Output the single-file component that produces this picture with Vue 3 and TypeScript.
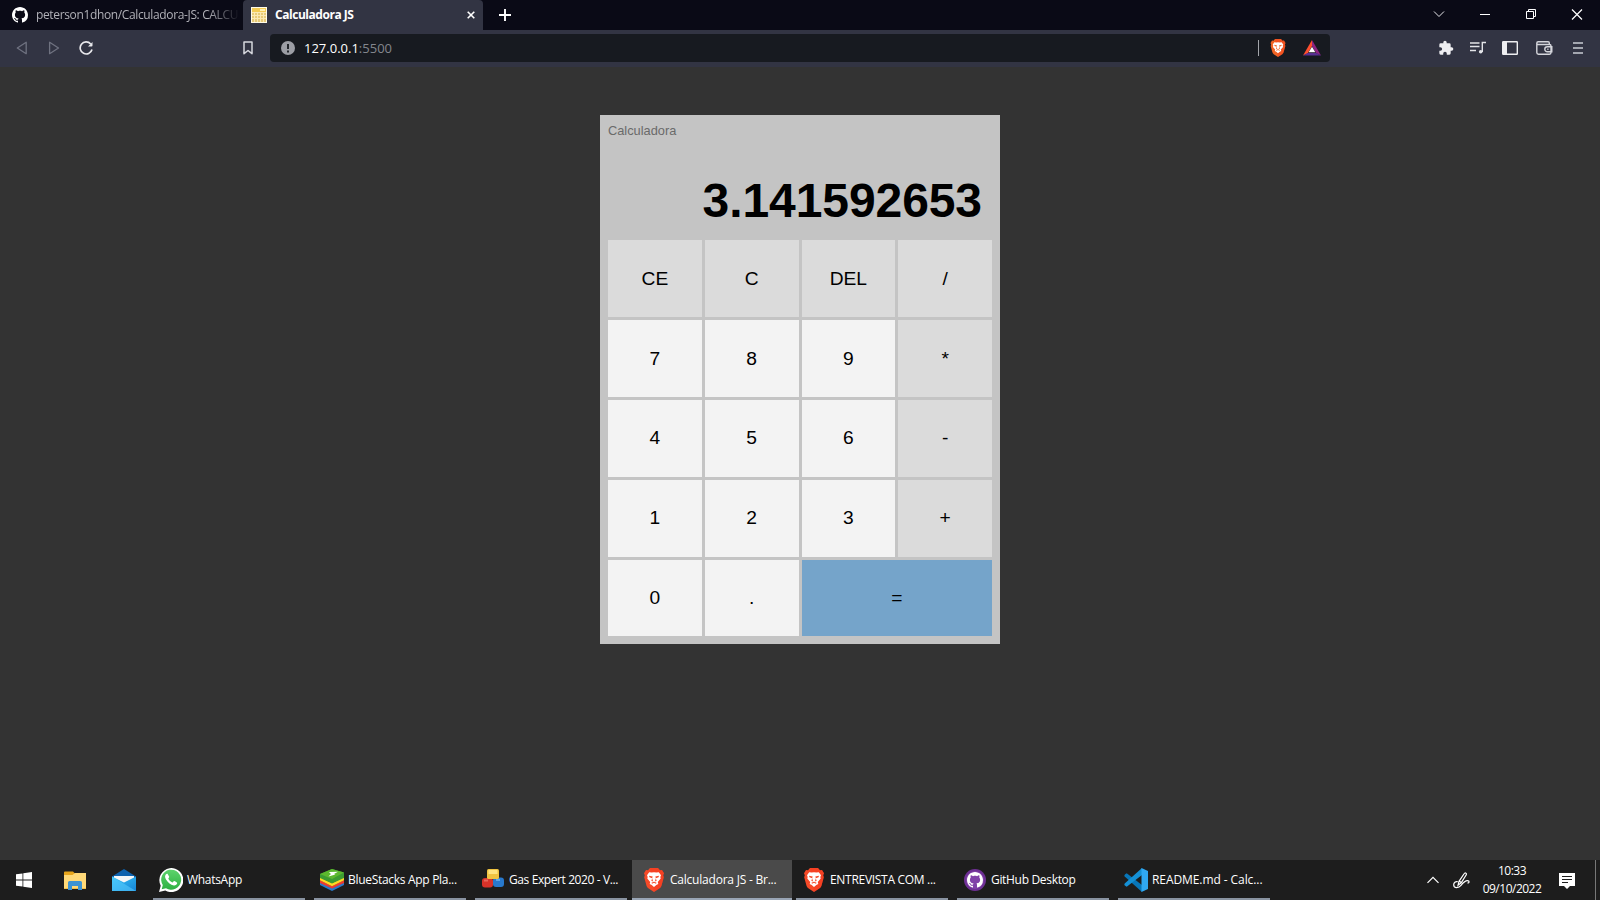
<script setup lang="ts">
interface Task { id: string; label: string; width: string; active?: boolean }
interface Key { label: string; kind: string }

const tasks: Task[] = [
  { id: 'whatsapp', label: 'WhatsApp', width: 'w161' },
  { id: 'bluestacks', label: 'BlueStacks App Pla...', width: 'w161' },
  { id: 'gas', label: 'Gas Expert 2020 - V...', width: 'w161' },
  { id: 'brave', label: 'Calculadora JS - Br...', width: 'w160', active: true },
  { id: 'brave', label: 'ENTREVISTA COM ...', width: 'w161' },
  { id: 'github', label: 'GitHub Desktop', width: 'w161' },
  { id: 'vscode', label: 'README.md - Calc...', width: 'w160' },
]

const op = (label: string): Key => ({ label, kind: 'op' })
const num = (label: string): Key => ({ label, kind: 'num' })
const keys: Key[] = [
  op('CE'), op('C'), op('DEL'), op('/'),
  num('7'), num('8'), num('9'), op('*'),
  num('4'), num('5'), num('6'), op('-'),
  num('1'), num('2'), num('3'), op('+'),
  num('0'), num('.'), { label: '=', kind: 'equals' },
]
const result = '3.141592653'
</script>

<template>
  <div class="screen">
    <svg class="defs" width="0" height="0">
      <defs>
        <linearGradient id="mail" x1="0" y1="0" x2="1" y2="1"><stop offset="0" stop-color="#35c3f5" /><stop offset="1" stop-color="#1785d8" /></linearGradient>
        <linearGradient id="wa" x1="0" y1="0" x2="0" y2="1"><stop offset="0" stop-color="#5dd36c" /><stop offset="1" stop-color="#2fb143" /></linearGradient>
        <symbol id="octocat" viewBox="0 0 16 16">
          <path d="M8 0C3.58 0 0 3.58 0 8c0 3.54 2.29 6.53 5.47 7.59.4.07.55-.17.55-.38 0-.19-.01-.82-.01-1.49-2.01.37-2.53-.49-2.69-.94-.09-.23-.48-.94-.82-1.13-.28-.15-.68-.52-.01-.53.63-.01 1.08.58 1.23.82.72 1.21 1.87.87 2.33.66.07-.52.28-.87.51-1.07-1.78-.2-3.64-.89-3.64-3.95 0-.87.31-1.59.82-2.15-.08-.2-.36-1.02.08-2.12 0 0 .67-.21 2.2.82.64-.18 1.32-.27 2-.27.68 0 1.36.09 2 .27 1.53-1.04 2.2-.82 2.2-.82.44 1.1.16 1.92.08 2.12.51.56.82 1.27.82 2.15 0 3.07-1.87 3.75-3.65 3.95.29.25.54.73.54 1.48 0 1.07-.01 1.93-.01 2.2 0 .21.15.46.55.38A8.013 8.013 0 0016 8c0-4.42-3.58-8-8-8z" />
        </symbol>
        <symbol id="lion" viewBox="0 0 20 24">
          <path d="M6 0h8l2 2.200 2-.2 2 3.200-.8 2 .6 2-2.300 8.600c-.3 1-1 1.900-1.800 2.500L10 24l-5.700-3.700c-.8-.6-1.500-1.500-1.800-2.500L.2 9.200l.6-2L0 5.200 2 2l2 .2z" fill="currentColor" />
          <path d="M6 0h8l2 2.200 2-.2 2 3.200-.8 2 .6 2-2.300 8.600c-.3 1-1 1.900-1.800 2.500L10 24z" fill="#f5301c" opacity=".3" />
          <path d="M5.200 4.300l2.500.3 2.300-.4 2.300.4 2.500-.3 2.200 3-.7 1.700.4 1.600-2.900 3.500.5 1.900-2 1-2.300 2-2.300-2-2-1 .5-1.900-2.900-3.500.4-1.600-.7-1.700z" fill="#fff" />
          <path d="M5 7.800l3.700.7-.6 1.700-2.600-1zM15 7.800l-3.700.7.6 1.700 2.600-1zM8.300 10.300l-1 2.400 1.900.8-.6-1.400zM11.700 10.300l1 2.400-1.900.8.6-1.400zM7.500 14.700l2.500-.9 2.500.9-.5 1-2-.9-2 .9z" fill="currentColor" />
        </symbol>
      </defs>
    </svg>

    <header class="tabs">
      <div class="tab idle">
        <svg class="tab-icon" width="16" height="16" fill="#fff"><use href="#octocat" /></svg>
        <span class="tab-title">peterson1dhon/Calculadora-JS: CALCU</span>
      </div>
      <div class="tab current">
        <svg class="tab-icon" width="16" height="16" viewBox="0 0 16 16">
          <path fill="#fffbe8" d="M0 0h16v16H0z" /><path fill="#f4cc55" d="M1 1h14v4H1z" /><path fill="#fff1b5" d="M9 2h5v2H9z" /><path fill="#fbe9b4" d="M1 5h14v10H1z" />
          <g fill="#e8cb78"><path d="M1 6h2v2H1zM4 6h2v2H4zM7 6h2v2H7zM10 6h2v2h-2zM13 6h2v2h-2zM1 9h2v2H1zM4 9h2v2H4zM7 9h2v2H7zM10 9h2v2h-2zM13 9h2v2h-2zM1 12h2v3H1zM4 12h2v3H4zM7 12h2v3H7zM10 12h2v3h-2zM13 12h2v3h-2z" /></g>
        </svg>
        <span class="tab-title">Calculadora JS</span>
        <svg class="close" width="8" height="8" viewBox="0 0 8 8"><path d="M.7.700l6.600 6.600M7.300.7.700 7.300" stroke="#fff" stroke-width="1.600" /></svg>
      </div>
      <svg class="plus" width="12" height="12" viewBox="0 0 12 12"><path d="M6 0v12M0 6h12" stroke="#fff" stroke-width="1.900" /></svg>
      <div class="win-controls">
        <svg width="46" height="30" viewBox="0 0 46 30" fill="none" stroke="#e6e6ea"><path d="M18 11.500l5 5 5-5" /></svg>
        <svg width="46" height="30" viewBox="0 0 46 30" fill="none" stroke="#fff"><path d="M18 14.500h10" /></svg>
        <svg width="46" height="30" viewBox="0 0 46 30" fill="none" stroke="#fff"><path d="M18.500 11.500h7v7h-7zM20.500 11.500v-2h7v7h-2" /></svg>
        <svg width="46" height="30" viewBox="0 0 46 30" fill="none" stroke="#fff" stroke-width="1.200"><path d="M18 9.500l10 10M28 9.500l-10 10" /></svg>
      </div>
    </header>

    <nav class="toolbar">
      <svg class="back" width="12" height="14" viewBox="0 0 12 14"><path d="M10.200 1.300v11.400L1.300 7z" fill="none" stroke="#6f7280" stroke-width="1.300" stroke-linejoin="round" /></svg>
      <svg class="forward" width="12" height="14" viewBox="0 0 12 14"><path d="M1.600 1.300v11.400L10.500 7z" fill="none" stroke="#6f7280" stroke-width="1.300" stroke-linejoin="round" /></svg>
      <svg class="reload" width="15" height="15" viewBox="0 0 15 15"><path d="M11.700 3A6 6 0 1 0 13 8.500" fill="none" stroke="#e8e8ec" stroke-width="1.700" /><path d="M9 5.600h3.500a1 1 0 0 0 1-1V.900z" fill="#e8e8ec" /></svg>
      <svg class="bookmark" width="10" height="14" viewBox="0 0 10 14"><path d="M1 1h8v11.700L5 9.500l-4 3.200z" fill="none" stroke="#d6d7de" stroke-width="1.500" stroke-linejoin="round" /></svg>
      <div class="address">
        <svg class="info" width="14" height="14" viewBox="0 0 14 14"><circle cx="7" cy="7" r="7" fill="#9c9ea5" /><path d="M7 3v5M7 9.500v2" stroke="#171a20" stroke-width="1.800" /></svg>
        <span class="url">127.0.0.1<span class="port">:5500</span></span>
        <i class="separator"></i>
        <svg class="shield" width="16" height="18"><use href="#lion" width="16" height="18" /></svg>
        <svg class="rewards" width="18" height="16" viewBox="0 0 18 16"><path fill="#ff4f2e" d="M9 0L0 15.500l4.800-2.300L9 6z" /><path fill="#8c2381" d="M9 0l9 15.500-4.800-2.300L9 6z" /><path fill="#572f91" d="M0 15.600h18l-4.800-2.700H4.800z" /><path fill="#fff" d="M9 6.800l3.300 5.500H5.700z" /></svg>
      </div>
      <div class="actions">
        <svg width="16" height="16" viewBox="0 0 24 24" fill="#eeeef1"><path d="M20.500 11H19V7a2 2 0 0 0-2-2h-4V3.500a2.500 2.500 0 0 0-5 0V5H4a2 2 0 0 0-2 2v3.800h1.500a2.700 2.700 0 0 1 0 5.400H2V20a2 2 0 0 0 2 2h3.800v-1.500a2.700 2.700 0 0 1 5.400 0V22H17a2 2 0 0 0 2-2v-4h1.500a2.500 2.500 0 0 0 0-5z" /></svg>
        <svg class="playlist" width="16" height="14" viewBox="0 0 16 14" fill="none" stroke="#e3e4e8" stroke-width="1.400"><path d="M0 2h9.500M0 5.500h9.500M0 9.500h6M12.300 11V1.500H16" /><circle cx="10.700" cy="10.800" r="1.800" fill="#e3e4e8" stroke="none" /></svg>
        <svg class="sidebar" width="16" height="14" viewBox="0 0 16 14"><rect x=".7" y=".7" width="14.600" height="12.600" fill="none" stroke="#eeeef1" stroke-width="1.400" rx=".5" /><path fill="#eeeef1" d="M1 1h4v12H1z" /></svg>
        <svg class="wallet" width="17" height="14" viewBox="0 0 17 14" fill="none" stroke="#d5d6dc" stroke-width="1.400"><path d="M13.300 3.500V2a1.200 1.200 0 0 0-1.200-1.200H2.200C.3.800.3 3.500 2.200 3.500h11.300c1 0 1.500.5 1.500 1.500v6.500c0 1-.5 1.700-1.500 1.700H2.500c-1.100 0-1.700-.6-1.700-1.700V2.200M15.800 5.700h-4.500a2.500 2.500 0 0 0 0 5h4.500zM11.300 8.200h1.200" /></svg>
        <svg class="menu" width="10" height="12" viewBox="0 0 10 12" stroke="#c9cbd4" stroke-width="1.700"><path d="M0 1h10M0 6h10M0 11h10" /></svg>
      </div>
    </nav>

    <main class="page">
      <section class="calculator">
        <div class="caption">Calculadora</div>
        <div class="display">{{ result }}</div>
        <div class="keypad">
          <div v-for="key in keys" :key="key.label" class="key" :class="key.kind">{{ key.label }}</div>
        </div>
      </section>
    </main>

    <footer class="taskbar">
      <div class="pinned">
        <svg class="start" width="16" height="16" viewBox="0 0 16 16" fill="#fff"><path d="M0 2.300l6.500-.9v6.200H0zM7.300 1.300L16 0v7.600H7.300zM0 8.400h6.500v6.200L0 13.700zM7.300 8.400H16V16l-8.700-1.300z" /></svg>
        <svg class="explorer" width="22" height="19" viewBox="0 0 22 19"><path fill="#e7a51b" d="M0 1.500Q0 .5 1 .5h8l2 2h10v5H0z" /><path fill="#ffd978" d="M0 4h8.500L11 2h11v16H0z" /><path fill="#3d93d3" d="M4 19v-7.500Q4 10 5.500 10h11q1.500 0 1.500 1.500V19h-4v-4H8v4z" /><path fill="#f2bf48" d="M0 17h4v1H0zM8 17h6v1H8zM18 17h4v1h-4z" /></svg>
        <svg class="mail" width="24" height="22" viewBox="0 0 24 22"><path fill="#0e62ae" d="M0 7.500L12 0l12 7.500v6H0z" /><path fill="#f4f6f7" d="M2 7h20v4l-10 5L2 11z" /><path fill="url(#mail)" d="M0 7.500l12 6 12-6V22H0z" /><path fill="#59ceff" opacity=".55" d="M0 22V7.500L24 22z" /></svg>
      </div>
      <div class="tasks">
        <div v-for="task in tasks" :key="task.label" class="task" :class="[task.width, task.id, { active: task.active }]">
          <span class="task-icon">
            <svg v-if="task.id === 'whatsapp'" width="24" height="24" viewBox="0 0 24 24"><path fill="#fff" d="M0 24l1.700-6.300A12 12 0 1 1 6.300 22.500z" /><path fill="url(#wa)" d="M2.700 21.300l1.100-4.200a10 10 0 1 1 3.200 3.100z" /><path fill="#fff" d="M8.800 6.300c-.4-.8-1.500-.5-2 .2-1.200 1.500-.8 3.400.4 5.200 1.900 2.800 4.300 5 7.600 5.800 1.600.2 3.200-.8 3.400-2.500.1-.9-2.600-2-3-2.100-.8 0-1.100 1.500-1.800 1.500-1.700-.6-3.300-2-4-3.600-.2-.6 1-1.200.8-2z" /></svg>
            <svg v-else-if="task.id === 'bluestacks'" width="24" height="22" viewBox="0 0 24 22"><path fill="#2879c8" d="M0 13.500l12 5 12-5v2.600L12 22 0 16z" /><path fill="#e93b31" d="M0 11l12 6 12-6v3l-12 5.500L0 14z" /><path fill="#ffda24" d="M0 8l12 6 12-6v3.200l-12 6-12-6z" /><path fill="#3c9c31" d="M0 5l12-5 12 3.500V9l-12 5.500L0 9z" /><path fill="#5cb82e" d="M0 5l12-5 12 3.500L12 10z" /><path fill="#fff" d="M9 3l9-.3-4 2.200 1.400.5-6.900 2 2.400-2.300z" /></svg>
            <svg v-else-if="task.id === 'gas'" width="22" height="19" viewBox="0 0 22 19"><rect y="9" width="11" height="9.500" rx="3" fill="#d83229" /><path fill="#e8665a" d="M2 10.500h4v2H2z" /><rect x="11" y="8.500" width="11" height="9.500" rx="3" fill="#2879cd" /><path fill="#5ca6ea" d="M14 10h4v2h-4z" /><rect x="5" width="12" height="10" rx="1.500" fill="#f0c341" /><path fill="#ffe480" d="M6.500 1h9v4h-9z" /></svg>
            <svg v-else-if="task.id === 'brave'" width="20" height="24"><use href="#lion" /></svg>
            <svg v-else-if="task.id === 'github'" width="22" height="22" viewBox="0 0 22 22"><circle cx="11" cy="11" r="11" fill="#6e3094" /><circle cx="11" cy="11" r="9" fill="#8041a8" /><use href="#octocat" x="3" y="3" width="16" height="16" fill="#fff" /></svg>
            <svg v-else width="24" height="24" viewBox="0 0 24 24"><path fill="#0876b8" d="M1.200 6.200l1.500-.9L18 17v7L.7 8.400q-.9-1 .5-2.200z" /><path fill="#1590d5" d="M1.200 17.800l1.500.9L18 7V0L.7 15.600q-.9 1 .5 2.200z" /><path fill="#30a8f2" d="M17.500 0L24 3v18l-6.500 3z" /></svg>
          </span>
          <span class="task-label">{{ task.label }}</span>
        </div>
      </div>
      <div class="tray">
        <svg class="chevron" width="12" height="8" viewBox="0 0 12 8"><path d="M.5 6.800L6 1.300l5.500 5.500" fill="none" stroke="#fff" stroke-width="1.200" /></svg>
        <svg class="pen" width="17" height="17" viewBox="0 0 17 17" fill="none" stroke="#fff" stroke-width="1.200"><path d="M4.800 9.700C2.500 9 .7 10.700.7 12.700c0 4 5.100 3.600 7.300.7 2.300-3 4.300-4.800 6.500-4.800 2 0 2 2.700-.1 2.400M5 13.300l1-4L11.300 1.500c.8-1.300 2.800 0 2 1.300L8.200 10.800zM6.500 9.200l1.800 1.300" /></svg>
        <div class="clock"><span>10:33</span><span>09/10/2022</span></div>
        <svg class="notice" width="16" height="16" viewBox="0 0 16 16"><path fill="#fff" d="M0 0h16v13h-5l-3 3-3-3H0z" /><path d="M3 3.500h10M3 6.500h10M3 9.500h6" stroke="#1d1d1d" /></svg>
        <i class="peek"></i>
      </div>
    </footer>
  </div>
</template>

<style>
body { margin: 0; overflow: hidden; background: #333; }
</style>

<style scoped>
.screen { width: 1600px; height: 900px; display: flex; flex-direction: column; overflow: hidden; background: #333; font-family: "Open Sans", "Noto Sans", sans-serif; font-size: 12px; }
.defs { position: absolute; }
svg { display: block; flex: none; }
.tabs { height: 30px; display: flex; align-items: center; background: #0a0a16; color: #fff; flex: none; }
.tab { box-sizing: border-box; display: flex; align-items: center; height: 30px; flex: none; }
.tab-title { margin-top: -1px; }
.idle { width: 243px; padding-left: 12px; color: #b1b1b8; }
.idle .tab-title { margin-left: 8px; white-space: nowrap; letter-spacing: -.36px; mask-image: linear-gradient(90deg, #000 172px, transparent 204px); }
.current { width: 240px; padding: 0 8px; background: #323443; border-radius: 4px 4px 0 0; }
.current .tab-title { margin-left: 8px; flex: 1; font-weight: 700; letter-spacing: -.46px; }
.plus { margin-left: 16px; }
.win-controls { display: flex; margin-left: auto; }
.toolbar { height: 37px; flex: none; display: flex; align-items: center; box-sizing: border-box; background: #323443; }
.toolbar > * { margin-bottom: 1px; }
.back { margin-left: 16px; }
.forward { margin-left: 20px; }
.reload { margin-left: 19px; }
.bookmark { margin-left: 149px; }
.address { width: 1060px; height: 28px; margin-left: 17px; display: flex; align-items: center; background: #171a20; border-radius: 4px; }
.info { margin-left: 11px; }
.url { margin-left: 9px; color: #fff; font-size: 13px; letter-spacing: 0; }
.port { color: #83868d; }
.separator { width: 1px; height: 16px; margin-left: auto; background: #a3a5aa; }
.shield { margin-left: 11px; color: #f06424; }
.rewards { margin: 0 9px 0 17px; }
.actions { display: flex; align-items: center; margin-left: auto; margin-right: 17px; }
.playlist { margin-left: 16px; }
.sidebar { margin-left: 16px; }
.wallet { margin-left: 18px; }
.menu { margin-left: 20px; }
.page { flex: 1; display: flex; justify-content: center; align-items: flex-start; padding-top: 48px; background: #333; }
.calculator { box-sizing: border-box; width: 400px; height: 529px; padding: 8px; background: #c4c4c4; font-family: "Liberation Sans", Arial, sans-serif; }
.caption { height: 15px; line-height: 15px; font-size: 12.8px; color: #6a6a6a; }
.display { height: 102.4px; box-sizing: border-box; padding: 34px 10px 0 0; line-height: 58px; text-align: right; font-size: 48px; font-weight: 700; letter-spacing: -.08px; color: #000; }
.keypad { display: grid; grid-template-columns: repeat(4, 1fr); grid-template-rows: repeat(5, 76.8px); gap: 3px; }
.key { display: flex; align-items: center; justify-content: center; font-size: 19.2px; color: #000; }
.op { background: #dbdbdb; }
.num { background: #f3f3f3; }
.equals { grid-column: span 2; background: #75a4ca; }
.taskbar { height: 40px; flex: none; display: flex; background: #1d1d1d; color: #fff; }
.pinned { width: 149px; display: flex; align-items: center; }
.start { margin-left: 16px; }
.explorer { margin-left: 32px; }
.mail { margin-left: 26px; }
.tasks { display: flex; }
.task { box-sizing: border-box; height: 40px; display: flex; align-items: center; padding-left: 10px; position: relative; }
.w161 { width: 161px; }
.w160 { width: 160px; }
.task::after { content: ""; position: absolute; left: 4px; bottom: 0; width: 152px; height: 2px; background: #8993a1; }
.task.active { background: #4a4a4a; }
.task.active::after { left: 0; width: 160px; background: #99a5b5; }
.task-icon { width: 28px; display: flex; }
.gas .task-icon { margin-left: 1px; width: 27px; margin-top: -3px; }
.brave .task-icon { padding-left: 2px; width: 26px; color: #f64a28; }
.github .task-icon { padding-left: 1px; width: 27px; }
.task-label { white-space: nowrap; letter-spacing: -.3px; margin-top: -2px; }
.active .task-label { letter-spacing: -.22px; }
.gas .task-label { letter-spacing: -.4px; }
.github .task-label { letter-spacing: -.32px; }
.vscode .task-label { letter-spacing: -.08px; }
.tray { flex: 1; display: flex; align-items: center; }
.chevron { margin-left: 153px; }
.pen { margin-left: 14px; }
.clock { width: 72px; margin-left: 6px; display: flex; flex-direction: column; align-items: center; line-height: 18px; letter-spacing: -.5px; }
.notice { margin-left: 11px; margin-top: 1px; }
.peek { width: 1px; height: 40px; margin-left: auto; margin-right: 4px; background: #777; }
</style>
